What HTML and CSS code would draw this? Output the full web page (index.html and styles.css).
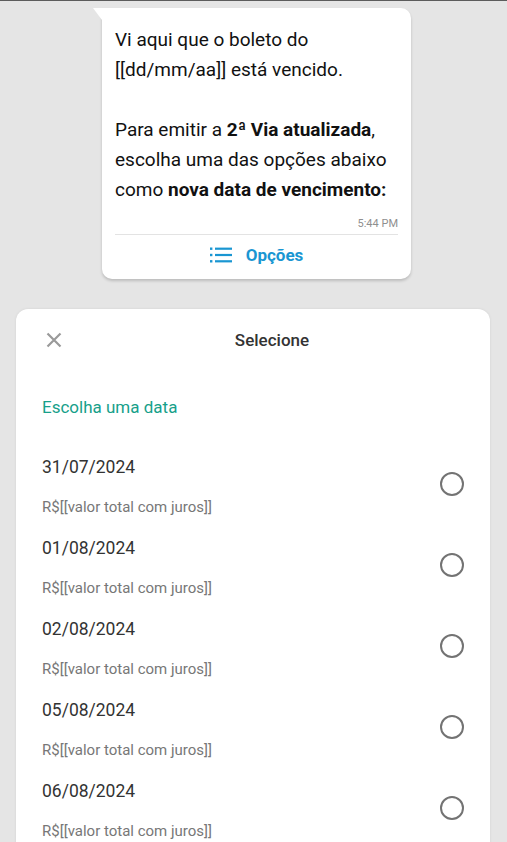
FILE: index.html
```html
<!DOCTYPE html>
<html lang="pt-BR">
<head>
<meta charset="utf-8">
<link rel="stylesheet" href="styles.css">
</head>
<body>
<div class="screen">
  <div class="bubble">
    <div class="tail"></div>
    <p class="msg">Vi aqui que o boleto do<br>[[dd/mm/aa]] está vencido.<br><br>Para emitir a <b>2ª Via atualizada</b>,<br>escolha uma das opções abaixo<br>como <b>nova data de vencimento:</b></p>
    <div class="time">5:44 PM</div>
    <div class="options">
      <svg class="list-icon" width="22" height="16" viewBox="0 0 22 16">
        <rect x="0" y="0.5" width="2.4" height="2.4" fill="#1a96d2"/>
        <rect x="0" y="6.8" width="2.4" height="2.4" fill="#1a96d2"/>
        <rect x="0" y="13.1" width="2.4" height="2.4" fill="#1a96d2"/>
        <rect x="5" y="0.6" width="17" height="2.2" fill="#1a96d2"/>
        <rect x="5" y="6.9" width="17" height="2.2" fill="#1a96d2"/>
        <rect x="5" y="13.2" width="17" height="2.2" fill="#1a96d2"/>
      </svg>
      <span>Opções</span>
    </div>
  </div>

  <div class="sheet">
    <div class="sheet-header">
      <div class="close">
        <svg width="16" height="16" viewBox="0 0 16 16"><path d="M1.5 1.5 L14.5 14.5 M14.5 1.5 L1.5 14.5" stroke="#9a9a9a" stroke-width="2.2" fill="none"/></svg>
      </div>
      <div class="title">Selecione</div>
    </div>
    <div class="section">Escolha uma data</div>
    <div class="list">
      <div class="item"><div class="info"><div class="date">31/07/2024</div><div class="value">R$[[valor total com juros]]</div></div><div class="radio"></div></div>
      <div class="item"><div class="info"><div class="date">01/08/2024</div><div class="value">R$[[valor total com juros]]</div></div><div class="radio"></div></div>
      <div class="item"><div class="info"><div class="date">02/08/2024</div><div class="value">R$[[valor total com juros]]</div></div><div class="radio"></div></div>
      <div class="item"><div class="info"><div class="date">05/08/2024</div><div class="value">R$[[valor total com juros]]</div></div><div class="radio"></div></div>
      <div class="item"><div class="info"><div class="date">06/08/2024</div><div class="value">R$[[valor total com juros]]</div></div><div class="radio"></div></div>
    </div>
  </div>
</div>
</body>
</html>
```

FILE: styles.css
```css
* { box-sizing: border-box; }
html, body {
  margin: 0;
  padding: 0;
  height: 100%;
  overflow: hidden;
  background: #e5e5e5;
  font-family: Roboto, "Noto Sans", Arial, sans-serif;
}
.screen {
  border-top: 1px solid #5c5c5c;
  padding-top: 7px;
  height: 842px;
  overflow: hidden;
}
.bubble {
  position: relative;
  margin-left: 102px;
  width: 309px;
  background: #fff;
  border-radius: 0 10px 10px 10px;
  padding: 17px 13px 0 13px;
  box-shadow: 0 2px 3px rgba(0,0,0,0.18);
}
.tail {
  position: absolute;
  left: -9px;
  top: 0;
  width: 0;
  height: 0;
  border-top: 12px solid #fff;
  border-left: 9px solid transparent;
}
.msg {
  margin: 0;
  font-size: 19px;
  line-height: 30px;
  color: #111;
  white-space: nowrap;
}
.msg b { font-weight: 700; }
.time {
  text-align: right;
  font-size: 11px;
  line-height: 14px;
  color: #8f8f8f;
  margin-top: 12px;
  padding-bottom: 3px;
  border-bottom: 1px solid #e3e3e3;
}
.options {
  display: flex;
  justify-content: center;
  align-items: center;
  gap: 14px;
  height: 44px;
  padding-bottom: 5px;
  color: #1a96d2;
  font-size: 17px;
  font-weight: 700;
}
.list-icon { display: block; }
.sheet {
  margin: 30px 0 0 16px;
  width: 474px;
  background: #fff;
  border-radius: 12px 12px 0 0;
  box-shadow: 0 0 3px rgba(0,0,0,0.08);
  min-height: 600px;
}
.sheet-header {
  display: flex;
  align-items: center;
  height: 61px;
  padding: 0 24px 0 14px;
}
.close {
  width: 48px;
  display: flex;
  justify-content: center;
  align-items: center;
}
.close svg { display: block; }
.title {
  flex: 1;
  text-align: center;
  font-size: 17px;
  font-weight: 500;
  color: #333;
}
.section {
  margin-top: 25px;
  padding-left: 26px;
  font-size: 17px;
  line-height: 24px;
  color: #17a08a;
}
.list {
  margin-top: 33px;
  padding: 0 26px 0 26px;
}
.item {
  display: flex;
  align-items: center;
  justify-content: space-between;
  margin-bottom: 16px;
}
.date {
  font-size: 17.5px;
  line-height: 30px;
  color: #333;
}
.value {
  margin-top: 15px;
  font-size: 15px;
  line-height: 20px;
  color: #777;
}
.radio {
  width: 24px;
  height: 24px;
  border: 2px solid #737373;
  border-radius: 50%;
  margin-top: -2px;
}
```
